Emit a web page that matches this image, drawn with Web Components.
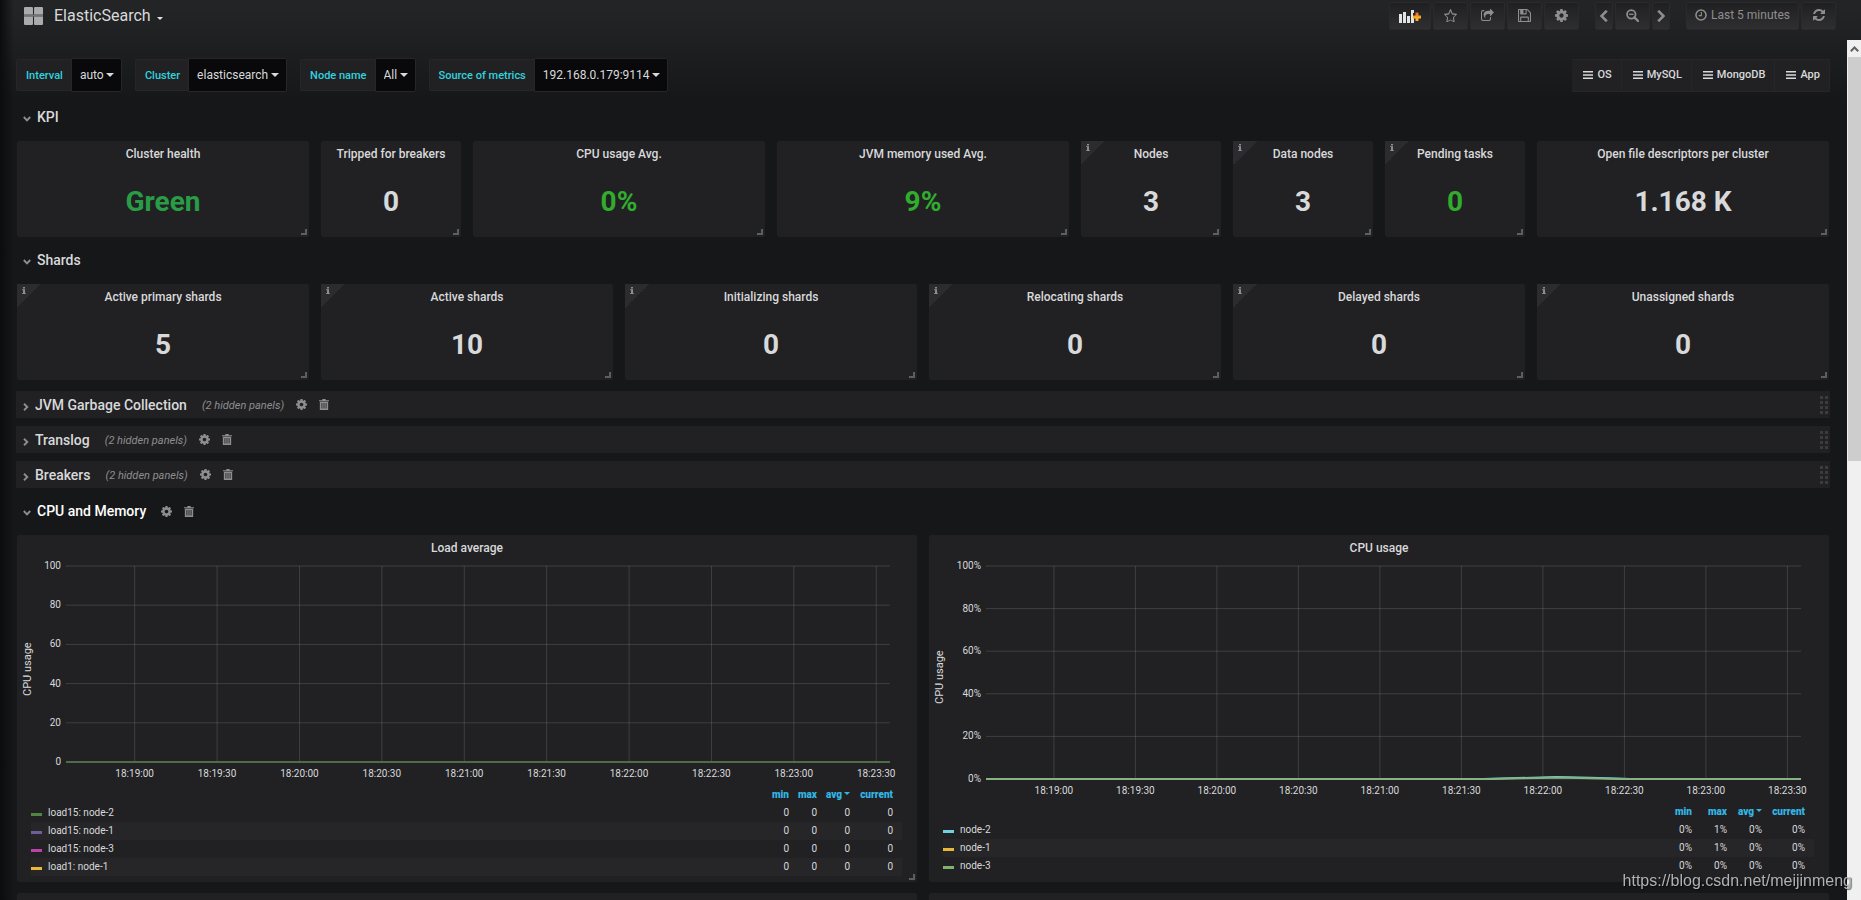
<!DOCTYPE html>
<html lang="en">
<head>
<meta charset="utf-8">
<title>ElasticSearch - Grafana</title>
<style>
  body { margin: 0; background: #161719; color: #d8d9da; font: 12px/16px Roboto, sans-serif; overflow: hidden; }
</style>
</head>
<body>
<gf-app></gf-app>
<script>
const ICONS = {
  star: ['0 0 1664 1536', '<path d="M1137 1004l306-297-422-62-189-382-189 382-422 62 306 297-73 421 378-199 377 199zM1664 615q0 22-26 48l-363 354 86 500q1 7 1 20 0 50-41 50-19 0-40-12l-449-236-449 236q-22 12-40 12-21 0-31.500-14.500t-10.500-35.500q0-6 2-20l86-500-364-354q-25-27-25-48 0-37 56-46l502-73 225-455q19-41 49-41t49 41l225 455 502 73q56 9 56 46z"/>'],
  share: ['0 0 1664 1408', '<path d="M1280 900v260a248 248 0 0 1-248 248H248A248 248 0 0 1 0 1160V376a248 248 0 0 1 248-248h250q-90 55-140 128H250a122 122 0 0 0-122 122v780a122 122 0 0 0 122 122h780a122 122 0 0 0 122-122V980zM1640 420l-384 384q-19 19-45 19-64 0-64-64V576h-120q-330 0-430 130-104 134-40 400-220-220-220-450Q337 192 987 192h160V64q0-64 64-64 26 0 45 19l384 356q22 22 0 45z"/>'],
  save: ['0 0 1536 1536', '<path d="M384 1408h768v-384H384zM1280 1408h128V512q0-14-10-38.500t-20-34.500l-281-281q-10-10-34-20t-39-10v416q0 40-28 68t-68 28H352q-40 0-68-28t-28-68V128H128v1280h128V992q0-40 28-68t68-28h832q40 0 68 28t28 68zM896 480V160q0-13-9.500-22.500T864 128H672q-13 0-22.500 9.500T640 160v320q0 13 9.500 22.500T672 512h192q13 0 22.500-9.500T896 480zM1536 512v928q0 40-28 68t-68 28H96q-40 0-68-28t-28-68V96q0-40 28-68T96 0h928q40 0 88 20t76 48l280 280q28 28 48 76t20 88z"/>'],
  cog: ['0 0 1536 1536', '<path d="M1024 768q0-106-75-181t-181-75-181 75-75 181 75 181 181 75 181-75 75-181zm512-109v222q0 12-8 23t-20 13l-185 28q-19 54-39 91 35 50 107 138 10 12 10 25t-9 23q-27 37-99 108t-94 71q-12 0-26-9l-138-108q-44 23-91 38-16 136-29 186-7 28-36 28H657q-14 0-24.500-8.500T621 1506l-28-184q-49-16-90-37l-141 107q-10 9-25 9-14 0-25-11-126-114-165-168-7-10-7-23 0-12 8-23 15-21 51-66.500t54-70.500q-27-50-41-99L29 913q-13-2-21-12.500T0 877V655q0-12 8-23t19-13l186-28q14-46 39-92-40-57-107-138-10-12-10-24 0-10 9-23 26-36 98.500-107.500T337 135q13 0 26 10l138 107q44-23 91-38 16-136 29-186 7-28 36-28h222q14 0 24.500 8.500T915 30l28 184q49 16 90 37l142-107q9-9 24-9 13 0 25 10 129 119 165 170 7 8 7 22 0 12-8 23-15 21-51 66.500t-54 70.500q26 50 41 98l183 28q13 2 21 12.500t8 23.500z"/>'],
  left: ['0 0 10 16', '<path d="M8.500 1 2 8l6.500 7" fill="none" stroke="currentColor" stroke-width="3.400"/>'],
  right: ['0 0 10 16', '<path d="M1.500 1 8 8l-6.500 7" fill="none" stroke="currentColor" stroke-width="3.400"/>'],
  zoomout: ['0 0 14 14', '<circle cx="5.700" cy="5.700" r="4.600" fill="none" stroke="currentColor" stroke-width="1.900"/><path d="M3.300 5h4.800v1.400H3.300z"/><path d="m9 9 4 4" stroke="currentColor" stroke-width="2.400" stroke-linecap="round"/>'],
  clock: ['0 0 14 14', '<circle cx="7" cy="7" r="5.900" fill="none" stroke="currentColor" stroke-width="1.800"/><path d="M7.400 3.500v4.200H4.300" fill="none" stroke="currentColor" stroke-width="1.300"/>'],
  refresh: ['0 0 1536 1536', '<path d="M1511 928q0 5-1 7-64 268-268 434.500T764 1536q-146 0-282.500-55T238 1324l-129 129q-19 19-45 19t-45-19-19-45V960q0-26 19-45t45-19h448q26 0 45 19t19 45-19 45l-137 137q71 66 161 102t187 36q134 0 250-65t186-179q11-17 53-117 8-23 30-23h192q13 0 22.500 9.500t9.500 22.500zM1536 128v448q0 26-19 45t-45 19h-448q-26 0-45-19t-19-45 19-45l138-138Q969 256 768 256q-134 0-250 65T332 500q-11 17-53 117-8 23-30 23H50q-13 0-22.500-9.500T18 608v-7q65-268 270-434.500T768 0q146 0 284 55.500T1297 212l130-129q19-19 45-19t45 19 19 45z"/>'],
  trash: ['0 0 12 14', '<path d="M4 0h4v1.500h4V3H0V1.500h4zM1 3.500h10V14H1zm2 1.700v7h1v-7zm2.500 0v7h1v-7zm2.500 0v7h1v-7z" fill-rule="evenodd"/>'],
  bars: ['0 0 12 10', '<path d="M0 0h12v2H0zM0 4h12v2H0zM0 8h12v2H0z"/>'],
  down: ['0 0 8 6', '<path d="M.8 1 4 4.300 7.200 1" fill="none" stroke="currentColor" stroke-width="1.900"/>'],
  next: ['0 0 6 8', '<path d="M1 .8 4.300 4 1 7.200" fill="none" stroke="currentColor" stroke-width="1.900"/>'],
  caret: ['0 0 8 4', '<path d="M0 0h8L4 4z"/>'],
  grid: ['0 0 18 18', '<path d="M1 0h6.500q1 0 1 1v6.500H0V1q0-1 1-1zM10.500 0H17q1 0 1 1v6.500H9.500V1q0-1 1-1zM0 9.500h8.500V17q0 1-1 1H1q-1 0-1-1zM9.500 9.500H18V17q0 1-1 1h-6.500q-1 0-1-1z"/><path d="M0 7.500h18v2H0z" opacity=".6"/>'],
  addpanel: ['0 0 22 13', '<path d="M0 4h3v9H0zM4 2h3v11H4zM8 6h3v7H8zM12 0h3v3h-1v5h1v5h-3z"/><path d="M16.500 2.500h3v3H22v3h-2.500V11h-3V8.500H14v-3h2.500z" fill="url(#g)"/><defs><linearGradient id="g" x1="0" y1="0" x2="0" y2="1"><stop offset="0" stop-color="#ef5b28"/><stop offset=".6" stop-color="#fbb021"/></linearGradient></defs>'],
  info: ['0 0 4 9', '<path d="M1 0h2v2H1zM0 3h3v5h1v1H0V8h1V4H0z"/>']
};

const define = (name, css, render) => customElements.define(name, class extends HTMLElement {
  connectedCallback() {
    if (this.shadowRoot) return;
    this.attachShadow({ mode: 'open' }).innerHTML = `<style>*{box-sizing:border-box}${css}</style>${render(this)}`;
  }
});
const attr = (el, n, d = '') => el.getAttribute(n) ?? d;

define('gf-icon', ':host{display:inline-flex;flex:none}svg{display:block;fill:currentColor}', el => {
  const [box, body] = ICONS[attr(el, 'name')];
  return `<svg aria-hidden="true" viewBox="${box}" width="${attr(el, 'w')}" height="${attr(el, 'h')}" preserveAspectRatio="none">${body}</svg>`;
});

define('gf-nav-button', `
  :host{display:block}
  button{display:flex;align-items:center;justify-content:center;gap:4px;height:28px;min-width:35px;padding:0 8px 2px;border:1px solid #2a2a2c;border-radius:2px;
    background:linear-gradient(#202022,#2f2f32);color:#8e8e8e;font:12px/16px Roboto,sans-serif}
  :host([narrow]) button{min-width:18px;padding:0 3px}
  :host([bright]) button{color:#e3e3e3;min-width:42px;padding-bottom:0}`,
  el => `<button type="button" aria-label="${attr(el, 'label')}"><slot></slot></button>`);

define('gf-navbar', `
  :host{display:flex;align-items:flex-start;height:40px;padding:2px 25px 0 24px}
  .title{display:flex;align-items:center;gap:11px;height:28px;border:0;padding:0;background:none;color:#d8d9da;font:16px/20px Roboto,sans-serif}
  .title gf-icon{color:#aaabac}
  .title .caret{color:#e3e3e3;margin:4px 0 0 -5px}
  .group{display:flex;gap:2px}
  .space{flex:1}
  .group+.group{margin-left:16px}`,
  () => `
  <button class="title" type="button"><gf-icon name="grid" w="19" h="18"></gf-icon>ElasticSearch<gf-icon class="caret" name="caret" w="6" h="3"></gf-icon></button>
  <div class="space"></div>
  <div class="group">
    <gf-nav-button bright label="Add panel"><gf-icon name="addpanel" w="22" h="13"></gf-icon></gf-nav-button>
    <gf-nav-button label="Mark as favorite"><gf-icon name="star" w="13" h="13"></gf-icon></gf-nav-button>
    <gf-nav-button label="Share dashboard"><gf-icon name="share" w="13" h="12"></gf-icon></gf-nav-button>
    <gf-nav-button label="Save dashboard"><gf-icon name="save" w="13" h="13"></gf-icon></gf-nav-button>
    <gf-nav-button label="Settings"><gf-icon name="cog" w="13" h="13"></gf-icon></gf-nav-button>
  </div>
  <div class="group">
    <gf-nav-button narrow label="Back"><gf-icon name="left" w="8" h="12"></gf-icon></gf-nav-button>
    <gf-nav-button label="Zoom out"><gf-icon name="zoomout" w="13" h="13"></gf-icon></gf-nav-button>
    <gf-nav-button narrow label="Forward"><gf-icon name="right" w="8" h="12"></gf-icon></gf-nav-button>
  </div>
  <div class="group">
    <gf-nav-button label="Last 5 minutes"><gf-icon name="clock" w="12" h="12"></gf-icon>Last 5 minutes</gf-nav-button>
    <gf-nav-button label="Refresh"><gf-icon name="refresh" w="12" h="12"></gf-icon></gf-nav-button>
  </div>`);

define('gf-variable', `
  :host{display:flex;align-items:center}
  label{height:32px;padding:0 8px 0 9px;border:1px solid #262628;border-right:0;border-radius:2px 0 0 2px;background:#212124;color:#32d1df;font:500 11px/32px Roboto,sans-serif}
  .value{display:grid;align-items:center;height:34px;border:1px solid #262628;border-radius:0 2px 2px 0;background:#09090b;color:#d8d9da}
  select,gf-icon{grid-area:1/1}
  select{appearance:none;height:32px;border:0;margin:0;padding:0 17px 0 8px;background:none;color:inherit;font:12px/32px Roboto,sans-serif}
  gf-icon{justify-self:end;margin-right:7px;pointer-events:none}`,
  el => `<label for="v">${attr(el, 'label')}</label><div class="value"><select id="v"><option>${attr(el, 'value')}</option></select><gf-icon name="caret" w="8" h="4"></gf-icon></div>`);

define('gf-links', `
  :host{display:flex}
  a{display:flex;align-items:center;gap:4px;height:33px;padding:0 9px 0 11px;border:1px solid #262628;border-left-width:0;background:#212124;color:#d8d9da;font:500 11px/16px Roboto,sans-serif;text-decoration:none}
  a:first-child{border-left-width:1px}`,
  el => attr(el, 'items').split(',').map(t => `<a href="#${t}"><gf-icon name="bars" w="10" h="8"></gf-icon>${t}</a>`).join(''));

define('gf-row', `
  :host{display:flex;align-items:center;height:30px;padding:0 2px 0 7px;margin:0 -1px 9px;color:#d8d9da}
  :host([collapsed]){height:27px;margin-bottom:8px;background:#212124}
  button{display:flex;align-items:center;border:0;padding:0;background:none;color:#8e8e8e}
  .toggle{gap:6px;font:500 14px/20px Roboto,sans-serif}
  .toggle span{color:#d8d9da}
  :host([active]) .toggle span{color:#fff}
  .toggle gf-icon{margin-top:4px}
  em{margin:2px 0 0 15px;color:#8e8e8e;font-size:11px}
  .act{margin-left:12px}
  :host([active]) .toggle{margin-right:3px}
  .grip{margin-left:auto;display:grid;grid-template-columns:repeat(2,3px);gap:2px}
  .grip i{height:3px;background:#3c3c3f}`,
  el => {
    const col = el.hasAttribute('collapsed');
    return `<button class="toggle" type="button"><gf-icon name="${col ? 'next' : 'down'}" w="${col ? 6 : 8}" h="${col ? 8 : 6}"></gf-icon><span>${attr(el, 'title')}</span></button>` +
      (col ? '<em>(2 hidden panels)</em>' : '') +
      (col || el.hasAttribute('active') ? `<button class="act" type="button" aria-label="Row settings"><gf-icon name="cog" w="11" h="11"></gf-icon></button><button class="act" type="button" aria-label="Delete row"><gf-icon name="trash" w="10" h="11"></gf-icon></button>` : '') +
      (col ? `<div class="grip">${'<i></i>'.repeat(8)}</div>` : '');
  });

define('gf-panel', `
  :host{display:flex;flex-direction:column;position:relative;grid-column:span var(--span,4);min-width:0;background:#212124;border-radius:2px}
  h2{margin:0;padding:5px 0 3px;text-align:center;font:500 12px/16px Roboto,sans-serif;color:#d8d9da}
  .info{position:absolute;left:0;top:0;width:24px;height:24px;padding:3px 0 0 5px;background:linear-gradient(135deg,#2c2c30 50%,transparent 50%);color:#8e8e8e}
  .info gf-icon{display:block}
  .grip{position:absolute;right:2px;bottom:2px;width:6px;height:6px;border:solid #5e5e60;border-width:0 2px 2px 0}`,
  el => (el.hasAttribute('info') ? '<div class="info"><gf-icon name="info" w="4" h="7"></gf-icon></div>' : '') +
    `<h2>${attr(el, 'title')}</h2><slot></slot>` + (el.hasAttribute('nogrip') ? '' : '<div class="grip"></div>'));

define('gf-stat', `
  :host{display:block;padding:19px 0 17px;text-align:center;font:700 28px/36px Roboto,sans-serif;color:var(--tone,#d8d9da)}`,
  () => '<slot></slot>');

define('gf-grid', `
  :host{display:grid;grid-template-columns:repeat(24,1fr);gap:11px 12px;margin-bottom:8px}
  :host([spaced]){margin-bottom:11px}`,
  () => '<slot></slot>');

define('gf-chart', `
  :host{display:grid;grid-template-columns:19px var(--axis,18px) 1fr;column-gap:5px;padding:7px var(--end,27px) 0 2px;font:10px/12px Roboto,sans-serif}
  .name{writing-mode:vertical-rl;transform:rotate(180deg);text-align:center;font-size:11px;line-height:18px;height:calc(var(--plot) + 10px)}
  .y{display:flex;flex-direction:column;justify-content:space-between;align-items:flex-end;height:calc(var(--plot) + 12px);margin-top:-6px}
  .plot svg{display:block;width:100%;overflow:visible}
  .plot>svg{height:var(--plot)}
  .x{display:grid;grid-template-columns:repeat(10,10%);width:100%;margin:6px 0 0 calc(10% / 3);text-align:center}
  line{stroke:#c8c8c8;stroke-opacity:.18}`,
  el => {
    const times = ['19:00', '19:30', '20:00', '20:30', '21:00', '21:30', '22:00', '22:30', '23:00', '23:30'];
    const unit = attr(el, 'unit');
    const h = [0, 20, 40, 60, 80, 100].map(p => `<line x1="0" x2="100%" y1="${p}%" y2="${p}%"/>`).join('');
    const v = times.map((_, i) => { const x = (25 + 30 * i) / 3; return `<line x1="${x}%" x2="${x}%" y1="0" y2="100%"/>`; }).join('');
    const series = unit
      ? '<path d="M0 213H610Q650 212 700 211Q760 212 790 213H1000" stroke="#6ed0e0" stroke-width="2"/><path d="M0 213H620Q660 212.500 700 211.500Q750 212.500 780 213H1000" stroke="#86b383" stroke-width="2"/>'
      : '<path d="M0 213H1000" stroke="#5a7f50" stroke-width="1.500"/>';
    return `<div class="name">CPU usage</div>
      <div class="y">${[100, 80, 60, 40, 20, 0].map(n => `<span>${n}${unit}</span>`).join('')}</div>
      <div class="plot"><svg>${h}${v}<svg width="100%" height="100%" viewBox="0 0 1000 213" preserveAspectRatio="none" fill="none">${series}</svg></svg>
      <div class="x">${times.map(t => `<span>18:${t}</span>`).join('')}</div></div>`;
  });

define('gf-legend', `
  :host{display:block;padding:6px 15px 0 14px}
  table{width:100%;border-collapse:collapse;table-layout:fixed;font:10px/12px Roboto,sans-serif}
  th,td{height:18px;padding:0;text-align:right}
  th{color:#33b5e5;font-weight:900}
  .name{text-align:left}
  .name i{display:inline-block;width:11px;height:3px;margin-right:6px;vertical-align:0;background:var(--c)}
  tbody tr:nth-child(even){background:#262628}
  col.n{width:var(--n,28px)}col.a{width:var(--a,33px)}col.c{width:43px}col.e{width:9px}
  gf-icon{vertical-align:3px;margin-left:2px}`,
  el => {
    const rows = attr(el, 'rows').split(';').map(r => r.split(','));
    return `<table><colgroup><col><col class="n"><col class="n"><col class="a"><col class="c"><col class="e"></colgroup>
    <thead><tr><th></th><th>min</th><th>max</th><th>avg<gf-icon name="caret" w="6" h="3"></gf-icon></th><th>current</th><th></th></tr></thead>
    <tbody>${rows.map(([c, n, ...v]) => `<tr style="--c:${c}"><td class="name"><i></i>${n}</td>${v.map(x => `<td>${x}</td>`).join('')}<td></td></tr>`).join('')}</tbody></table>`;
  });

define('gf-scrollbar', `
  :host{display:flex;flex-direction:column;flex:none;width:14px;background:#f0f0f0;padding-left:1px}
  .up{display:flex;justify-content:center;align-items:center;height:17px;color:#606060}
  .thumb{height:47%;background:#cdcdcd}`,
  () => `<div class="up"><svg width="9" height="6" viewBox="0 0 9 6" fill="none" stroke="currentColor" stroke-width="2"><path d="M.8 5.200 4.500 1.500 8.200 5.200"/></svg></div><div class="thumb"></div>`);

define('gf-app', `
  :host{display:flex;flex-direction:column;height:100vh;background:linear-gradient(90deg,#0b0c0d,transparent 14px),linear-gradient(180deg,#222426 10px,#161719 100px)}
  .body{display:flex;flex:1;min-height:0}
  main{flex:1;min-width:0;overflow:hidden;padding:18px 18px 0 17px}
  .controls{display:flex;align-items:center;gap:13px;margin:0 -1px 10px}
  gf-links{margin-left:auto}
  .green{--tone:#299c46}.ok{--tone:#32ac2d}
  .w2{--span:2}.w12{--span:12;min-height:347px}
  .load{--plot:196px}
  .cpu{--plot:213px;--axis:26px;--end:28px}
  .cpul{--n:35px;--a:35px}
  .mark{position:fixed;right:9px;bottom:9px;color:#b0b1b2;font:16px/20px "Liberation Sans",Arial,sans-serif;text-shadow:1px 1px 1px #0008}`,
  () => {
    const stat = (t, v, w = '', c = '', i = '') => `<gf-panel class="${w}" title="${t}" ${i}><gf-stat class="${c}">${v}</gf-stat></gf-panel>`;
    return `<gf-navbar></gf-navbar>
  <div class="body"><main>
    <div class="controls">
      <gf-variable label="Interval" value="auto"></gf-variable>
      <gf-variable label="Cluster" value="elasticsearch"></gf-variable>
      <gf-variable label="Node name" value="All"></gf-variable>
      <gf-variable label="Source of metrics" value="192.168.0.179:9114"></gf-variable>
      <gf-links items="OS,MySQL,MongoDB,App"></gf-links>
    </div>
    <gf-row title="KPI"></gf-row>
    <gf-grid>
      ${stat('Cluster health', 'Green', '', 'green')}${stat('Tripped for breakers', '0', 'w2')}${stat('CPU usage Avg.', '0%', '', 'ok')}${stat('JVM memory used Avg.', '9%', '', 'ok')}
      ${stat('Nodes', '3', 'w2', '', 'info')}${stat('Data nodes', '3', 'w2', '', 'info')}${stat('Pending tasks', '0', 'w2', 'ok', 'info')}${stat('Open file descriptors per cluster', '1.168 K')}
    </gf-grid>
    <gf-row title="Shards"></gf-row>
    <gf-grid spaced>
      ${[['Active primary', 5], ['Active', 10], ['Initializing', 0], ['Relocating', 0], ['Delayed', 0], ['Unassigned', 0]].map(([t, v]) => stat(t + ' shards', v, '', '', 'info')).join('')}
    </gf-grid>
    <gf-row collapsed title="JVM Garbage Collection"></gf-row>
    <gf-row collapsed title="Translog"></gf-row>
    <gf-row collapsed title="Breakers"></gf-row>
    <gf-row active title="CPU and Memory"></gf-row>
    <gf-grid>
      <gf-panel class="w12" title="Load average"><gf-chart class="load" unit=""></gf-chart>
        <gf-legend rows="#508642,load15: node-2,0,0,0,0;#705da0,load15: node-1,0,0,0,0;#ba43a9,load15: node-3,0,0,0,0;#eab839,load1: node-1,0,0,0,0"></gf-legend></gf-panel>
      <gf-panel class="w12" nogrip title="CPU usage"><gf-chart class="cpu" unit="%"></gf-chart>
        <gf-legend class="cpul" rows="#6ed0e0,node-2,0%,1%,0%,0%;#eab839,node-1,0%,1%,0%,0%;#7eb26d,node-3,0%,0%,0%,0%"></gf-legend></gf-panel>
      <gf-panel class="w12" title=""></gf-panel><gf-panel class="w12" title=""></gf-panel>
    </gf-grid>
  </main><gf-scrollbar></gf-scrollbar></div>
  <div class="mark">https://blog.csdn.net/meijinmeng</div>`;
  });
</script>
</body>
</html>
